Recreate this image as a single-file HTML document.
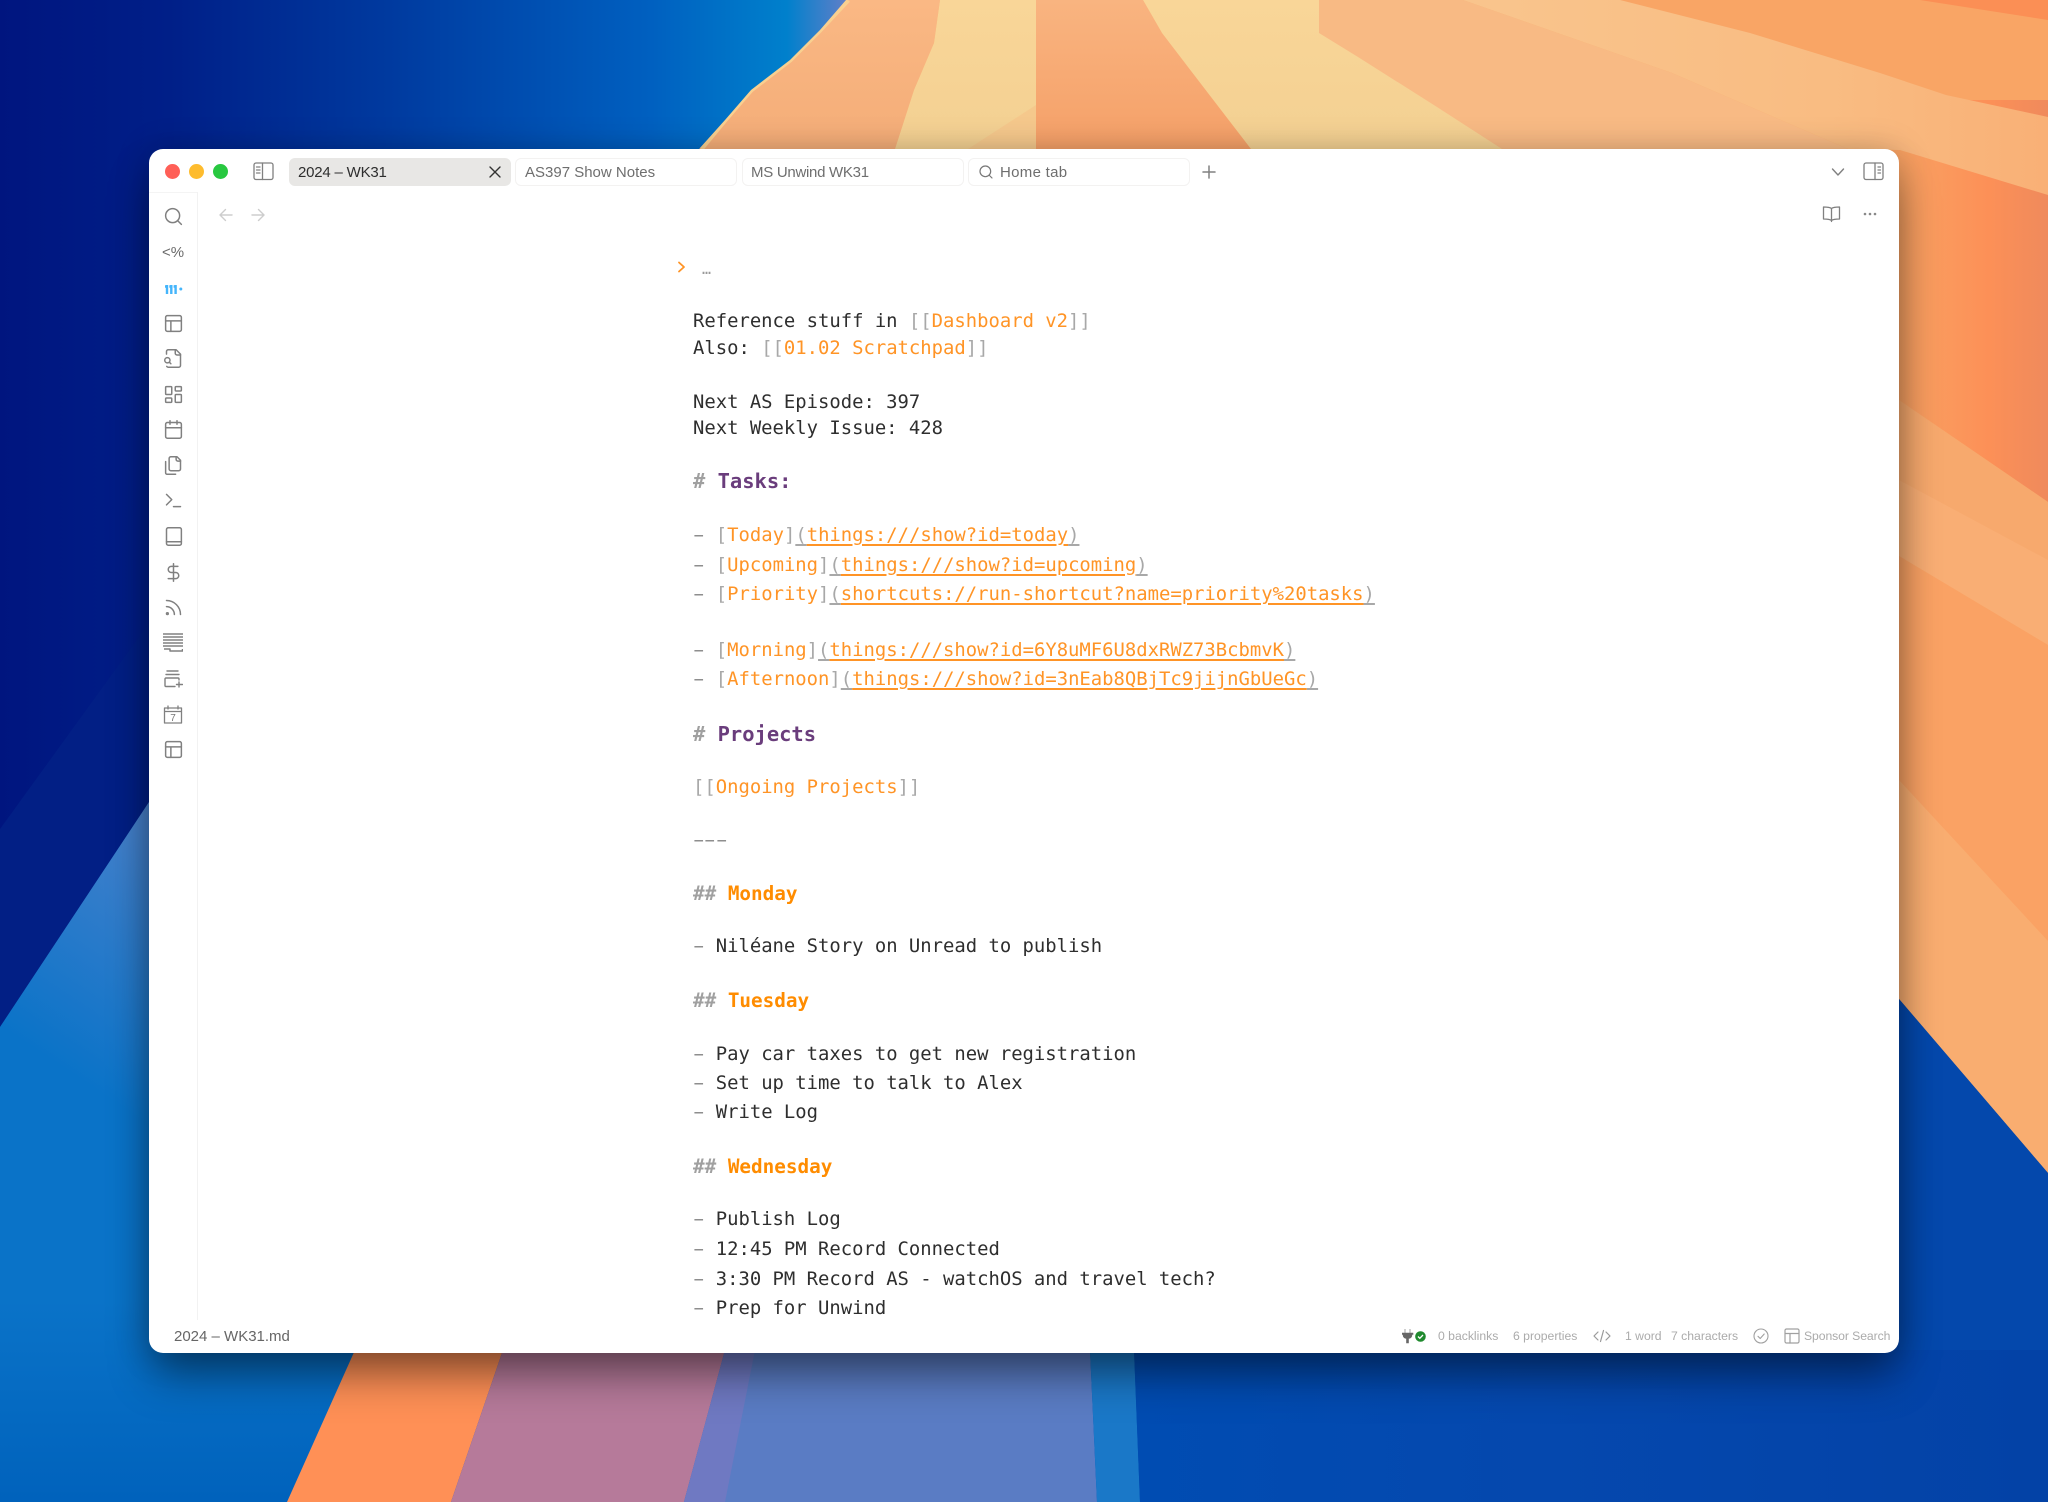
<!DOCTYPE html>
<html><head><meta charset="utf-8"><title>2024 – WK31</title>
<style>
html,body{margin:0;padding:0;width:2048px;height:1502px;overflow:hidden;background:#0448ac}
#bg{position:absolute;left:0;top:0}
#win{position:absolute;left:149px;top:149px;width:1750px;height:1204px;background:#fff;border-radius:14px;box-shadow:0 26px 44px -4px rgba(0,0,0,.42),0 2px 34px rgba(0,0,0,.22)}
.abs,.l,.t,.s,svg.i{position:absolute}
#app{position:absolute;left:0;top:0;width:2048px;height:1502px;font-family:"Liberation Sans",sans-serif}
.tab{position:absolute;top:158px;height:28px;box-sizing:border-box;border:1px solid #f3f2f1;border-radius:6px;background:#fff}
.t{top:163px;font-size:15px;line-height:20px;color:#6e6e6e;white-space:pre}
.l{left:693px;font-family:"DejaVu Sans Mono","Liberation Mono",monospace;font-size:18.89px;line-height:30px;height:30px;color:#2e2e2e;white-space:pre}
.p{color:#a8a8a8}.o{color:#ff9426}
.d{display:inline-block;transform:scaleX(1.8);color:#8e8e8e}
.u{color:#ff9426;text-decoration:underline;text-decoration-thickness:1.5px;text-underline-offset:3px}
.g{color:#a8a8a8;text-decoration:underline;text-decoration-thickness:1.5px;text-underline-offset:3px}
.h1{font-weight:bold;font-size:20.45px;color:#6a3d7c}
.h2{font-weight:bold;font-size:19.3px;color:#ff8c00}
.h1 .p,.h2 .p{color:#a0a0a0}
.s{top:1328px;font-size:12.2px;line-height:16px;color:#ababab;white-space:pre}
svg.i{fill:none;stroke:#808080;stroke-width:1.7;stroke-linecap:round;stroke-linejoin:round}
</style></head><body>
<svg id="bg" width="2048" height="1502" viewBox="0 0 2048 1502">
<defs>
<linearGradient id="navy" x1="0" y1="0" x2="846" y2="0" gradientUnits="userSpaceOnUse">
<stop offset="0" stop-color="#00157f"/><stop offset=".2" stop-color="#001f88"/><stop offset=".46" stop-color="#003a9f"/><stop offset=".77" stop-color="#0060c0"/><stop offset=".93" stop-color="#0080cc"/><stop offset="1" stop-color="#5f7fc8"/>
</linearGradient>
<linearGradient id="low" x1="149" y1="802" x2="0" y2="1027" gradientUnits="userSpaceOnUse">
<stop offset="0" stop-color="#4a82cc"/><stop offset="1" stop-color="#0a73c8"/>
</linearGradient>
<linearGradient id="lowB" x1="0" y1="1300" x2="0" y2="1502" gradientUnits="userSpaceOnUse">
<stop offset="0" stop-color="#0062bc" stop-opacity="0"/><stop offset="1" stop-color="#0062bc"/>
</linearGradient>
<linearGradient id="brB" x1="0" y1="0" x2="2048" y2="0" gradientUnits="userSpaceOnUse">
<stop offset=".55" stop-color="#004cb2"/><stop offset=".75" stop-color="#0548ae"/><stop offset="1" stop-color="#0342a6"/>
</linearGradient>
<linearGradient id="or1" x1="0" y1="0" x2="0" y2="149" gradientUnits="userSpaceOnUse">
<stop offset="0" stop-color="#f9b480"/><stop offset="1" stop-color="#f5a068"/>
</linearGradient>
<linearGradient id="or2" x1="0" y1="0" x2="0" y2="149" gradientUnits="userSpaceOnUse">
<stop offset="0" stop-color="#fab884"/><stop offset="1" stop-color="#f4ad78"/>
</linearGradient>
<linearGradient id="cr" x1="0" y1="0" x2="0" y2="149" gradientUnits="userSpaceOnUse">
<stop offset="0" stop-color="#f9d698"/><stop offset="1" stop-color="#f3d092"/>
</linearGradient>
<linearGradient id="band" x1="1500" y1="0" x2="2048" y2="0" gradientUnits="userSpaceOnUse">
<stop offset="0" stop-color="#f9c48c"/><stop offset=".6" stop-color="#f9bc82"/><stop offset="1" stop-color="#f9b076"/>
</linearGradient>
<linearGradient id="org" x1="1900" y1="0" x2="2048" y2="0" gradientUnits="userSpaceOnUse">
<stop offset="0" stop-color="#f9a263"/><stop offset=".6" stop-color="#fc9057"/><stop offset="1" stop-color="#ef8a5c"/>
</linearGradient>
</defs>
<rect width="2048" height="1502" fill="url(#brB)"/>
<!-- upper right base -->
<polygon points="846,0 2048,0 2048,1173 1900,999 1300,800 600,800" fill="#f9a565"/>
<!-- light region -->
<polygon points="1300,0 1463,0 1672,73 1848,149 1848,400 1300,400" fill="#f8ba84"/>
<!-- right side bands -->
<polygon points="1848,100 2048,100 2048,502 1899,400 1848,400" fill="url(#org)"/>
<polygon points="1463,0 1620,0 1750,33 1880,73 1946,95 2048,117 2048,195 1900,150 1848,149 1672,73" fill="url(#band)"/>
<polygon points="1920,0 2048,0 2048,20" fill="#fb8f55"/>
<!-- strips -->
<polygon points="846,0 940,0 934,43 914,90 895,149 699,149 725,120 751,90 790,60 820,30" fill="url(#or2)"/>
<polygon points="940,0 1038,0 1036,149 895,149 914,90 934,43" fill="url(#cr)"/>
<polygon points="1036,0 1143,0 1162,33 1188,67 1221,110 1251,149 1036,149" fill="url(#or1)"/>
<polygon points="1143,0 1319,0 1319,33 1358,57 1437,107 1502,149 1251,149 1221,110 1188,67 1162,33" fill="url(#cr)"/>
<polygon points="968,149 1036,149 1036,105" fill="#f5c88c"/>
<polyline points="848,0 820,30 790,60 751,90 725,120 701,149" fill="none" stroke="#f9d090" stroke-width="5"/>
<polygon points="1899,400 2048,502 2048,645 1899,556" fill="#f7a96d"/>
<polygon points="1899,480 2048,560 2048,645 1899,556" fill="#f9ae74"/>
<polygon points="1899,556 2048,645 2048,941 1899,780" fill="#faa264"/>
<polygon points="1899,780 2048,941 2048,1173 1899,999" fill="#f9ad70"/>
<polygon points="1899,999 2048,1173 2048,1502 1899,1502" fill="#0448ac"/>
<!-- left -->
<polygon points="0,0 846,0 820,30 790,60 751,90 725,120 699,149 600,600 149,802 0,1027" fill="url(#navy)"/>
<polygon points="0,829 149,623 149,802 0,1027" fill="#021f85"/>
<polygon points="0,1027 149,802 400,700 400,1502 0,1502" fill="url(#low)"/>
<rect x="0" y="1300" width="400" height="202" fill="url(#lowB)"/>
<!-- bottom strips -->
<polygon points="355,1350 503,1350 451,1502 287,1502" fill="#ff9056"/>
<polygon points="503,1350 725,1350 684,1502 451,1502" fill="#b67a9a"/>
<polygon points="725,1350 1090,1350 1097,1502 684,1502" fill="#5a7cc4"/>
<polygon points="725,1350 755,1350 725,1502 684,1502" fill="#6f79c2"/>
<polygon points="1090,1350 1134,1350 1140,1502 1097,1502" fill="#1a78c8"/>
<polygon points="1134,1350 2048,1350 2048,1502 1140,1502" fill="url(#brB)"/>
</svg>
<div id="win"></div>
<div id="app">
<!-- traffic lights -->
<div class="abs" style="left:164.5px;top:163.5px;width:15px;height:15px;border-radius:50%;background:#ff5f57"></div>
<div class="abs" style="left:188.5px;top:163.5px;width:15px;height:15px;border-radius:50%;background:#febc2e"></div>
<div class="abs" style="left:213px;top:163.5px;width:15px;height:15px;border-radius:50%;background:#28c840"></div>
<svg class="i" style="left:253px;top:162px;stroke-width:1.3" width="21" height="19" viewBox="0 0 21 19"><rect x="1" y="1" width="19" height="16.5" rx="2"/><path d="M9.5 1v16.5M3.5 5h3.5M3.5 8h3.5M3.5 11h3.5"/></svg>
<!-- tabs -->
<div class="tab" style="left:289px;width:222px;background:#e8e7e5;border-color:#e8e7e5"></div>
<div class="t" style="left:298px;color:#2e2e2e;letter-spacing:-.2px">2024 – WK31</div>
<svg class="i" style="left:489px;top:166px;stroke:#333;stroke-width:1.4" width="12" height="12" viewBox="0 0 12 12"><path d="M1 1l10 10M11 1L1 11"/></svg>
<div class="tab" style="left:515px;width:222px"></div>
<div class="t" style="left:525px">AS397 Show Notes</div>
<div class="tab" style="left:742px;width:222px"></div>
<div class="t" style="left:751px;letter-spacing:-.28px">MS Unwind WK31</div>
<div class="tab" style="left:968px;width:222px"></div>
<svg class="i" style="left:978px;top:164px;stroke-width:1.8;stroke:#777" width="16" height="16" viewBox="0 0 24 24"><circle cx="11" cy="11" r="8"/><path d="m21 21-4.3-4.3"/></svg>
<div class="t" style="left:1000px;letter-spacing:.3px">Home tab</div>
<svg class="i" style="left:1201px;top:164px;stroke-width:1.5" width="16" height="16" viewBox="0 0 16 16"><path d="M8 2v12M2 8h12"/></svg>
<svg class="i" style="left:1831px;top:167px;stroke-width:1.4" width="14" height="10" viewBox="0 0 14 10"><path d="M1.5 2L7 8l5.5-6"/></svg>
<svg class="i" style="left:1863px;top:162px;stroke-width:1.3" width="21" height="19" viewBox="0 0 21 19"><rect x="1" y="1" width="19" height="16.5" rx="2"/><path d="M12 1v16.5M15 5h2.5M15 8h2.5M15 11h2.5"/></svg>
<!-- nav -->
<svg class="i" style="left:219px;top:208px;stroke:#cdcdcd;stroke-width:1.4" width="14" height="14" viewBox="0 0 14 14"><path d="M13 7H1M6.500 1.500L1 7l5.500 5.500"/></svg>
<svg class="i" style="left:251px;top:208px;stroke:#cdcdcd;stroke-width:1.4" width="14" height="14" viewBox="0 0 14 14"><path d="M1 7h12M7.500 1.500L13 7l-5.500 5.500"/></svg>
<svg class="i" style="left:1822px;top:205px;stroke-width:1.3" width="19" height="18" viewBox="0 0 19 18"><path d="M9.500 3.500C8 2.300 5 2 1.500 2v12c3.500 0 6.500.3 8 1.500 1.500-1.200 4.500-1.500 8-1.500V2c-3.500 0-6.500.3-8 1.500zM9.500 3.500v13"/></svg>
<svg class="abs" style="left:1862px;top:211px" width="16" height="6" viewBox="0 0 16 6"><circle cx="3" cy="3" r="1.300" fill="#888"/><circle cx="8" cy="3" r="1.300" fill="#888"/><circle cx="13" cy="3" r="1.300" fill="#888"/></svg>
<!-- sidebar separators -->
<div class="abs" style="left:149px;top:192px;width:48px;height:1px;background:#f4f4f4"></div>
<div class="abs" style="left:197px;top:192px;width:1px;height:1128px;background:#f2f2f2"></div>
<!-- sidebar icons -->
<svg class="i" style="left:162.500px;top:206px" width="21" height="21" viewBox="0 0 24 24"><circle cx="11" cy="11" r="8"/><path d="m21 21-4.300-4.300"/></svg>
<div class="abs" style="left:161px;top:244px;width:24px;text-align:center;font-size:15px;line-height:18px;color:#6a6a6a">&lt;%</div>
<svg class="abs" style="left:163.500px;top:283px" width="20" height="12" viewBox="0 0 20 12" fill="none" stroke="#45b5fb" stroke-width="2.400"><path d="M3 2v9M7.300 2v9M11.600 2v9M1 3.500h2M5.300 3.500h2M9.600 3.500h2"/><circle cx="16.800" cy="6" r="1.500" fill="#45b5fb" stroke="none"/></svg>
<svg class="i" style="left:162.500px;top:313px" width="21" height="21" viewBox="0 0 24 24"><rect x="3" y="3" width="18" height="18" rx="2"/><path d="M3 9h18M9 21V9"/></svg>
<svg class="i" style="left:162.500px;top:348px" width="21" height="21" viewBox="0 0 24 24"><path d="M14 2v4a2 2 0 0 0 2 2h4"/><path d="M4.268 21a2 2 0 0 0 1.727 1H18a2 2 0 0 0 2-2V7l-5-5H6a2 2 0 0 0-2 2v3"/><circle cx="5" cy="14" r="3"/><path d="m9 18-1.500-1.500"/></svg>
<svg class="i" style="left:162.500px;top:384px" width="21" height="21" viewBox="0 0 24 24"><rect x="3" y="3" width="7" height="9" rx="1"/><rect x="14" y="3" width="7" height="5" rx="1"/><rect x="14" y="12" width="7" height="9" rx="1"/><rect x="3" y="16" width="7" height="5" rx="1"/></svg>
<svg class="i" style="left:162.500px;top:419px" width="21" height="21" viewBox="0 0 24 24"><path d="M8 2v4M16 2v4"/><rect x="3" y="4" width="18" height="18" rx="2"/><path d="M3 10h18"/></svg>
<svg class="i" style="left:162.500px;top:455px" width="21" height="21" viewBox="0 0 24 24"><path d="M20 7h-3a2 2 0 0 1-2-2V2"/><path d="M9 18a2 2 0 0 1-2-2V4a2 2 0 0 1 2-2h7l4 4v10a2 2 0 0 1-2 2Z"/><path d="M3 7.600v12.800A1.600 1.600 0 0 0 4.600 22h9.800"/></svg>
<svg class="i" style="left:162.500px;top:490px" width="21" height="21" viewBox="0 0 24 24"><path d="M4 17l6-6-6-6M12 19h8"/></svg>
<svg class="i" style="left:162.500px;top:526px" width="21" height="21" viewBox="0 0 24 24"><rect x="4" y="2" width="17" height="20" rx="2"/><path d="M4 18h17"/></svg>
<svg class="i" style="left:162.500px;top:562px" width="21" height="21" viewBox="0 0 24 24"><path d="M12 2v20"/><path d="M17 5H9.500a3.500 3.500 0 0 0 0 7h5a3.500 3.500 0 0 1 0 7H6"/></svg>
<svg class="i" style="left:162.500px;top:597px" width="21" height="21" viewBox="0 0 24 24"><path d="M4 11a9 9 0 0 1 9 9"/><path d="M4 4a16 16 0 0 1 16 16"/><circle cx="5" cy="19" r="1"/></svg>
<svg class="i" style="left:163px;top:633px;stroke-width:1.500;stroke-linecap:butt" width="20" height="19" viewBox="0 0 20 19"><path d="M0 1h20M0 4h20M0 7h20M0 10h20M0 13h20M1 16h6v2h12.500V16"/></svg>
<svg class="i" style="left:164px;top:670px;stroke-width:1.400" width="19" height="18" viewBox="0 0 19 18"><path d="M3 1h11M2 4.500h13M15 10V9a1 1 0 0 0-1-1H2a1 1 0 0 0-1 1v6.500a1 1 0 0 0 1 1h9M15 12v5M12.500 14.500h6"/></svg>
<svg class="i" style="left:163px;top:705px;stroke-width:1.300" width="20" height="19" viewBox="0 0 20 19"><path d="M1.500 3h17v15h-17zM1.500 6.500h17M5 1v3M15 1v3"/><text x="10" y="16" text-anchor="middle" font-size="10" font-family="Liberation Sans" fill="#777" stroke="none">7</text></svg>
<svg class="i" style="left:162.500px;top:739px" width="21" height="21" viewBox="0 0 24 24"><rect x="3" y="3" width="18" height="18" rx="2"/><path d="M3 9h18M9 21V9"/></svg>
<!-- editor -->
<svg class="i" style="left:677px;top:261px;stroke:#ff9426;stroke-width:1.800" width="10" height="12" viewBox="0 0 10 12"><path d="M2 1.500L7 6l-5 4.500"/></svg>
<div class="l" style="left:702px;top:254px;font-size:15px;color:#999">…</div>
<div class="l" style="top:305.500px">Reference stuff in <span class="p">[[</span><span class="o">Dashboard v2</span><span class="p">]]</span></div>
<div class="l" style="top:332.500px">Also: <span class="p">[[</span><span class="o">01.02 Scratchpad</span><span class="p">]]</span></div>
<div class="l" style="top:386.500px">Next AS Episode: 397</div>
<div class="l" style="top:412.500px">Next Weekly Issue: 428</div>
<div class="l h1" style="top:466px"><span class="p"># </span>Tasks:</div>
<div class="l" style="top:520px"><span class="d">-</span> <span class="p">[</span><span class="o">Today</span><span class="p">]</span><span class="g">(</span><span class="u">things:///show?id=today</span><span class="g">)</span></div>
<div class="l" style="top:549.500px"><span class="d">-</span> <span class="p">[</span><span class="o">Upcoming</span><span class="p">]</span><span class="g">(</span><span class="u">things:///show?id=upcoming</span><span class="g">)</span></div>
<div class="l" style="top:579px"><span class="d">-</span> <span class="p">[</span><span class="o">Priority</span><span class="p">]</span><span class="g">(</span><span class="u">shortcuts://run-shortcut?name=priority%20tasks</span><span class="g">)</span></div>
<div class="l" style="top:635px"><span class="d">-</span> <span class="p">[</span><span class="o">Morning</span><span class="p">]</span><span class="g">(</span><span class="u">things:///show?id=6Y8uMF6U8dxRWZ73BcbmvK</span><span class="g">)</span></div>
<div class="l" style="top:664px"><span class="d">-</span> <span class="p">[</span><span class="o">Afternoon</span><span class="p">]</span><span class="g">(</span><span class="u">things:///show?id=3nEab8QBjTc9jijnGbUeGc</span><span class="g">)</span></div>
<div class="l h1" style="top:719px"><span class="p"># </span>Projects</div>
<div class="l" style="top:771.500px"><span class="p">[[</span><span class="o">Ongoing Projects</span><span class="p">]]</span></div>
<div class="l" style="top:824.500px"><span class="d">-</span><span class="d">-</span><span class="d">-</span></div>
<div class="l h2" style="top:879px"><span class="p">## </span>Monday</div>
<div class="l" style="top:931px"><span class="d">-</span> Niléane Story on Unread to publish</div>
<div class="l h2" style="top:986px"><span class="p">## </span>Tuesday</div>
<div class="l" style="top:1038.500px"><span class="d">-</span> Pay car taxes to get new registration</div>
<div class="l" style="top:1068px"><span class="d">-</span> Set up time to talk to Alex</div>
<div class="l" style="top:1097px"><span class="d">-</span> Write Log</div>
<div class="l h2" style="top:1152px"><span class="p">## </span>Wednesday</div>
<div class="l" style="top:1204px"><span class="d">-</span> Publish Log</div>
<div class="l" style="top:1234px"><span class="d">-</span> 12:45 PM Record Connected</div>
<div class="l" style="top:1263.500px"><span class="d">-</span> 3:30 PM Record AS - watchOS and travel tech?</div>
<div class="l" style="top:1293px"><span class="d">-</span> Prep for Unwind</div>
<!-- status bar -->
<div class="abs" style="left:174px;top:1327px;font-size:15px;line-height:20px;color:#666">2024 – WK31.md</div>
<svg class="abs" style="left:1402px;top:1329px" width="24" height="15" viewBox="0 0 24 15"><path d="M3 0v4M8 0v4M0 4h11v1.500H10C10 8 8.500 9.500 6.500 9.500V14h-2V9.500C2.500 9.500 1 8 1 5.500H0z" fill="#666" stroke="#666" stroke-width=".6"/><circle cx="18.500" cy="7.500" r="5.300" fill="#1f8a2e"/><path d="M16 7.500l1.800 1.800 3.200-3.300" fill="none" stroke="#fff" stroke-width="1.300"/></svg>
<div class="s" style="left:1438px">0 backlinks</div>
<div class="s" style="left:1513px">6 properties</div>
<svg class="i" style="left:1593px;top:1329px;stroke:#9a9a9a;stroke-width:1.200" width="18" height="14" viewBox="0 0 18 14"><path d="M5 3L1 7l4 4M13 3l4 4-4 4M10.500 1.500L7.500 12.500"/></svg>
<div class="s" style="left:1625px">1 word</div>
<div class="s" style="left:1671px">7 characters</div>
<svg class="i" style="left:1753px;top:1328px;stroke:#a0a0a0;stroke-width:1.100" width="16" height="16" viewBox="0 0 16 16"><circle cx="8" cy="8" r="7"/><path d="M5 8.300l2.200 2.200L11.200 6"/></svg>
<svg class="i" style="left:1784px;top:1328px;stroke:#a0a0a0;stroke-width:1.200" width="16" height="16" viewBox="0 0 16 16"><rect x="1" y="1" width="14" height="14" rx="1.500"/><path d="M1 5.500h14M6 15V5.500"/></svg>
<div class="s" style="left:1804px;letter-spacing:-.08px">Sponsor Search</div>
</div>
</body></html>
